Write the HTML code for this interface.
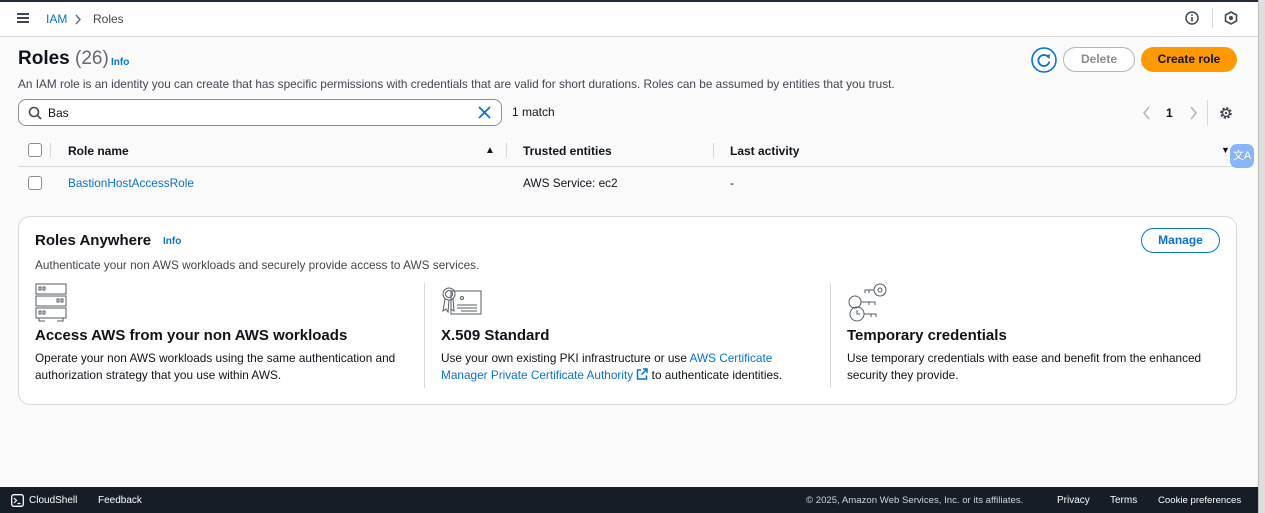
<!DOCTYPE html>
<html><head><meta charset="utf-8"><style>
*{box-sizing:border-box;margin:0;padding:0}
body{width:1265px;height:513px;overflow:hidden;background:#fafafa;font-family:"Liberation Sans",sans-serif;font-size:12px;color:#0f141a;position:relative}
.abs{position:absolute}
a{color:#0972d3}
.top{left:0;top:0;width:1258px;height:37px;background:#fff;border-top:2px solid #232b37;border-bottom:1px solid #d5dbdb}
.sb{left:1258px;top:0;width:7px;height:513px;background:#dedede;border-left:1px solid #bbb}
.footer{left:0;top:487px;width:1258px;height:26px;background:#161d26;color:#fff;font-size:10px}
.card{left:18px;top:216px;width:1219px;height:189px;background:#fff;border:1px solid #d5dbdb;border-radius:12px}
.h3{font-size:15px;font-weight:bold}
.p{font-size:11.8px;line-height:17px;color:#0f141a}
.sep{width:1px;background:#d5dbdb}
</style></head><body>
<div class="abs top">
  <div class="abs" style="left:17px;top:11px;width:12px;height:2px;background:#424650;box-shadow:0 4px 0 #424650,0 8px 0 #424650"></div>
  <a class="abs" style="left:46px;top:10px;font-size:12px">IAM</a>
  <svg class="abs" style="left:74px;top:12px" width="8" height="11"><path d="M2 1l4 4.5L2 10" fill="none" stroke="#656871" stroke-width="1.4"/></svg>
  <span class="abs" style="left:93px;top:10px;color:#424650">Roles</span>
  <svg class="abs" style="left:1185px;top:9px" width="14" height="14"><circle cx="7" cy="7" r="6" fill="none" stroke="#424650" stroke-width="1.5"/><rect x="6.2" y="6" width="1.6" height="4.5" fill="#424650"/><rect x="6.2" y="3.3" width="1.6" height="1.6" fill="#424650"/></svg>
  <div class="abs" style="left:1212px;top:6px;width:1px;height:20px;background:#d5dbdb"></div>
  <svg class="abs" style="left:1224px;top:9px" width="14" height="14"><polygon points="7,1 12.5,4 12.5,10 7,13 1.5,10 1.5,4" fill="none" stroke="#424650" stroke-width="1.6"/><circle cx="7" cy="7" r="2" fill="#424650"/></svg>
</div>
<div class="abs sb"></div>

<div class="abs" style="left:18px;top:48px;font-size:19px;font-weight:bold">Roles <span style="font-weight:normal;color:#656871">(26)</span></div>
<a class="abs" style="left:111px;top:57px;font-size:10px;font-weight:bold;text-decoration:none">Info</a>
<div class="abs" style="left:18px;top:77px;font-size:11.8px;color:#424650">An IAM role is an identity you can create that has specific permissions with credentials that are valid for short durations. Roles can be assumed by entities that you trust.</div>

<svg class="abs" style="left:1031px;top:47px" width="26" height="26"><circle cx="13" cy="13" r="12" fill="#fff" stroke="#0972d3" stroke-width="1.6"/><path d="M17.5 10.5 A5.5 5.5 0 1 0 18.3 14.5" fill="none" stroke="#0972d3" stroke-width="1.8"/><polygon points="14.5,8 19,7.5 18.5,12" fill="#0972d3"/></svg>
<div class="abs" style="left:1063px;top:47px;width:72px;height:25px;border:1.5px solid #b4b4bb;border-radius:13px;text-align:center;line-height:22px;color:#8c8c94;font-weight:bold;background:#fff">Delete</div>
<div class="abs" style="left:1141px;top:47px;width:96px;height:25px;border-radius:13px;background:#ff9900;text-align:center;line-height:25px;font-weight:bold">Create role</div>

<div class="abs" style="left:18px;top:99px;width:484px;height:27px;border:1px solid #8c8c94;border-radius:8px;background:#fff"></div>
<svg class="abs" style="left:28px;top:106px" width="14" height="14"><circle cx="6" cy="6" r="4.5" fill="none" stroke="#424650" stroke-width="1.6"/><line x1="9.3" y1="9.3" x2="13" y2="13" stroke="#424650" stroke-width="1.6"/></svg>
<div class="abs" style="left:48px;top:106px">Bas</div>
<svg class="abs" style="left:478px;top:106px" width="13" height="13"><path d="M1 1L12 12M12 1L1 12" stroke="#0972d3" stroke-width="1.8"/></svg>
<div class="abs" style="left:512px;top:105px">1 match</div>
<svg class="abs" style="left:1142px;top:106px" width="9" height="14"><path d="M7 1L2 7l5 6" fill="none" stroke="#b4b4bb" stroke-width="1.6"/></svg>
<div class="abs" style="left:1166px;top:106px;font-weight:bold">1</div>
<svg class="abs" style="left:1189px;top:106px" width="9" height="14"><path d="M2 1l5 6-5 6" fill="none" stroke="#b4b4bb" stroke-width="1.6"/></svg>
<div class="abs" style="left:1207px;top:100px;width:1px;height:26px;background:#d5dbdb"></div>
<svg class="abs" style="left:1219px;top:106px" width="14" height="14"><circle cx="7" cy="7" r="4.6" fill="none" stroke="#424650" stroke-width="2.4" stroke-dasharray="2.2 1.4"/><circle cx="7" cy="7" r="3.5" fill="none" stroke="#424650" stroke-width="1.3"/><circle cx="7" cy="7" r="1.2" fill="#424650"/></svg>

<div class="abs" style="left:28px;top:143px;width:14px;height:14px;border:1.5px solid #8c8c94;border-radius:3px;background:#fff"></div>
<div class="abs sep" style="left:50px;top:143px;height:15px"></div>
<div class="abs" style="left:68px;top:144px;font-weight:bold;color:#0f141a">Role name</div>
<div class="abs" style="left:485px;top:145px;font-size:10px">▲</div>
<div class="abs sep" style="left:506px;top:143px;height:15px"></div>
<div class="abs" style="left:523px;top:144px;font-weight:bold">Trusted entities</div>
<div class="abs sep" style="left:713px;top:143px;height:15px"></div>
<div class="abs" style="left:730px;top:144px;font-weight:bold">Last activity</div>
<div class="abs" style="left:1221px;top:145px;font-size:9px">▼</div>
<div class="abs" style="left:18px;top:166px;width:1219px;height:1px;background:#d5dbdb"></div>
<div class="abs" style="left:1230px;top:144px;width:24px;height:24px;border-radius:7px;background:#8ab4f8;color:#fff;font-size:11px;text-align:center;line-height:24px">文A</div>
<div class="abs" style="left:28px;top:176px;width:14px;height:14px;border:1.5px solid #8c8c94;border-radius:3px;background:#fff"></div>
<a class="abs" style="left:68px;top:176px;font-size:11.8px">BastionHostAccessRole</a>
<div class="abs" style="left:523px;top:176px;font-size:11.8px">AWS Service: ec2</div>
<div class="abs" style="left:730px;top:176px">-</div>

<div class="abs card"></div>
<div class="abs h3" style="left:35px;top:232px">Roles Anywhere</div>
<a class="abs" style="left:163px;top:236px;font-size:10px;font-weight:bold;text-decoration:none">Info</a>
<div class="abs" style="left:1141px;top:228px;width:79px;height:25px;border:1.5px solid #0972d3;border-radius:13px;text-align:center;line-height:22px;color:#0972d3;font-weight:bold;background:#fff">Manage</div>
<div class="abs" style="left:35px;top:258px;color:#424650;font-size:11.8px">Authenticate your non AWS workloads and securely provide access to AWS services.</div>

<svg class="abs" style="left:35px;top:283px" width="40" height="40" fill="none" stroke="#545b64" stroke-width="1"><rect x="1" y="1" width="30" height="10"/><rect x="1" y="13" width="30" height="10"/><rect x="1" y="25" width="30" height="10"/><rect x="4" y="4" width="2" height="3"/><rect x="8" y="4" width="2" height="3"/><rect x="22" y="16" width="2" height="3"/><rect x="26" y="16" width="2" height="3"/><rect x="4" y="28" width="2" height="3"/><rect x="8" y="28" width="2" height="3"/><path d="M4 35v3h6M22 38h6v-3"/></svg>
<div class="abs h3" style="left:35px;top:327px">Access AWS from your non AWS workloads</div>
<div class="abs p" style="left:35px;top:350px">Operate your non AWS workloads using the same authentication and<br>authorization strategy that you use within AWS.</div>
<div class="abs sep" style="left:424px;top:283px;height:105px"></div>

<svg class="abs" style="left:441px;top:285px" width="42" height="34" fill="none" stroke="#545b64" stroke-width="1"><rect x="10" y="6" width="30" height="23"/><circle cx="8" cy="9" r="6"/><circle cx="8" cy="9" r="3.5"/><path d="M4 14l-2 12 3-2 2 3 1-12M12 14l1 12-3-2"/><circle cx="21" cy="13" r="1.5"/><path d="M16 20h20M16 23h20M20 26h16"/></svg>
<div class="abs h3" style="left:441px;top:327px">X.509 Standard</div>
<div class="abs p" style="left:441px;top:350px">Use your own existing PKI infrastructure or use <a style="text-decoration:none">AWS Certificate<br>Manager Private Certificate Authority</a> <svg width="12" height="12" style="vertical-align:-1px"><path d="M5 2H1.5v9h9V7.5M7 1h4v4M11 1L5.5 6.5" fill="none" stroke="#0972d3" stroke-width="1.5"/></svg> to authenticate identities.</div>
<div class="abs sep" style="left:830px;top:283px;height:105px"></div>

<svg class="abs" style="left:847px;top:283px" width="42" height="40" fill="none" stroke="#545b64" stroke-width="1"><circle cx="33" cy="7" r="6"/><circle cx="33" cy="7" r="2"/><path d="M27 7H18v3M22 7v3"/><circle cx="8" cy="19" r="6"/><path d="M14 19h14v3M22 19v3"/><circle cx="10" cy="31" r="7"/><path d="M10 27v4h3"/><path d="M17 31h12v3M24 31v3"/></svg>
<div class="abs h3" style="left:847px;top:327px">Temporary credentials</div>
<div class="abs p" style="left:847px;top:350px">Use temporary credentials with ease and benefit from the enhanced<br>security they provide.</div>

<div class="abs footer">
  <svg class="abs" style="left:11px;top:7px" width="13" height="13"><rect x="0.7" y="0.7" width="11.6" height="11.6" rx="2" fill="none" stroke="#fff" stroke-width="1.3"/><path d="M3 4l2.5 2.5L3 9M6.5 9.5h3" stroke="#fff" stroke-width="1.2" fill="none"/></svg>
  <span class="abs" style="left:29px;top:8px">CloudShell</span>
  <span class="abs" style="left:98px;top:8px">Feedback</span>
  <span class="abs" style="left:806px;top:8px;color:#d1d5db;font-size:9.6px">© 2025, Amazon Web Services, Inc. or its affiliates.</span>
  <span class="abs" style="left:1057px;top:8px">Privacy</span>
  <span class="abs" style="left:1110px;top:8px">Terms</span>
  <span class="abs" style="left:1158px;top:8px;font-size:9.6px">Cookie preferences</span>
</div>
</body></html>
